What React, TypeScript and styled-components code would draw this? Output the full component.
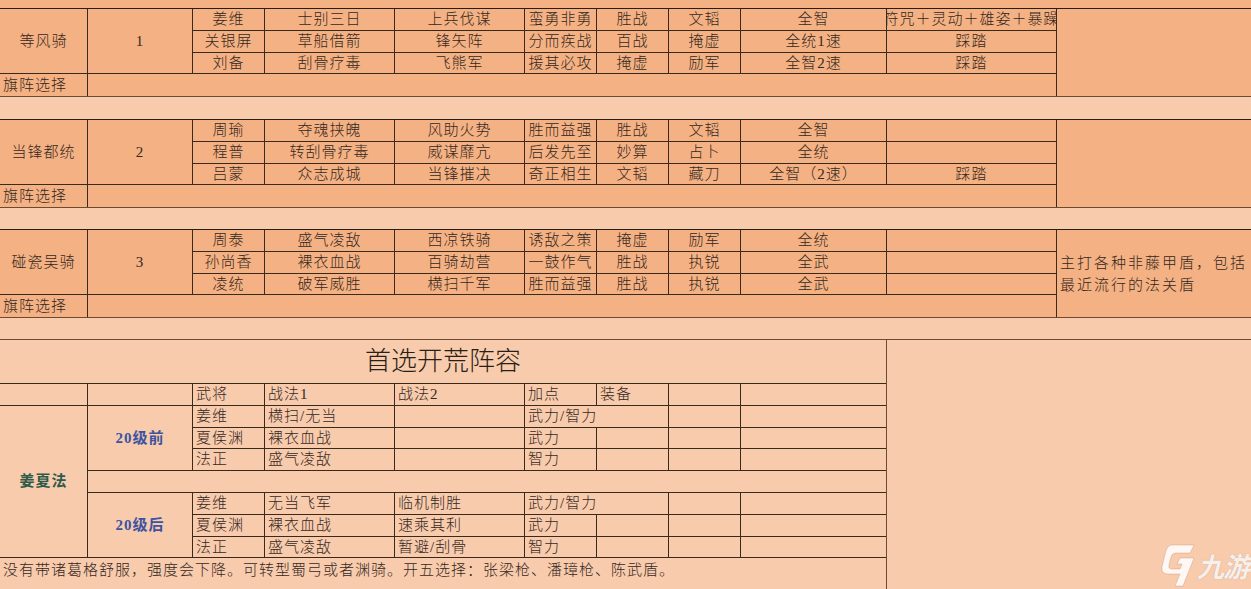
import styled, { createGlobalStyle } from "styled-components";

const GlobalStyle = createGlobalStyle`
  html, body {
    margin: 0;
    padding: 0;
    background: #f8cbad;
  }
  body {
    font-family: "Liberation Serif", "Noto Sans CJK SC", serif;
    color: #35281d;
  }
`;

const Page = styled.div`
  position: relative;
  width: 1251px;
  height: 589px;
  overflow: hidden;
  background: #f8cbad;
`;

const TopStrip = styled.div`
  height: 8px;
  background: #f4b183;
`;

const Spacer = styled.div<{ $h: number }>`
  height: ${(p) => p.$h}px;
`;

const SectionGrid = styled.div`
  display: grid;
  grid-template-columns: 87px 104px 71px 129px 129px 71px 71px 71px 145px 169px 1fr;
  grid-template-rows: 21px 21px 20px 22px;
  gap: 1px;
  background: #3a2a1c;
  border-top: 1px solid #2a1d12;
  border-bottom: 1px solid #6b4c33;
`;

const Cell = styled.div<{
  $span?: number;
  $rows?: number;
  $align?: "left" | "center";
  $light?: boolean;
}>`
  grid-column: span ${(p) => p.$span ?? 1};
  grid-row: span ${(p) => p.$rows ?? 1};
  display: flex;
  align-items: center;
  justify-content: ${(p) => (p.$align === "left" ? "flex-start" : "center")};
  padding: 0 ${(p) => (p.$align === "left" ? "3px" : "0")};
  background: ${(p) => (p.$light ? "#f8cbad" : "#f4b183")};
  font-size: 15px;
  font-weight: 300;
  letter-spacing: 1px;
  white-space: nowrap;
  overflow: hidden;
  line-height: 1;
`;

const NoteCell = styled(Cell)`
  white-space: normal;
  letter-spacing: 2px;
  line-height: 22px;
  padding: 0 0 0 3px;
`;

const BottomBlock = styled.div`
  display: flex;
  border-top: 1px solid #6b4c33;
`;

const PlanGrid = styled.div`
  width: 886px;
  display: grid;
  grid-template-columns: 87px 104px 71px 129px 129px 71px 71px 71px 145px;
  grid-template-rows: 43px 21px 21px 20px 21px 21px 21px 21px 20px 32px;
  gap: 1px;
  background: #3a2a1c;
  border-right: 1px solid #6b4c33;
`;

const Title = styled(Cell)`
  font-size: 26px;
  letter-spacing: 0;
  color: #2a1f16;
`;

const Footer = styled(Cell)`
  align-items: flex-start;
  padding-top: 5px;
`;

const Tag = styled(Cell)<{ $tone: "green" | "blue" }>`
  font-weight: bold;
  color: ${(p) => (p.$tone === "green" ? "#2e5a4b" : "#3c54a0")};
`;

const Mark = styled.div`
  position: absolute;
  right: 2px;
  bottom: 2px;
  display: flex;
  align-items: center;
  gap: 2px;
  color: rgba(255, 255, 255, 0.85);
`;

const MarkText = styled.span`
  font-family: "Noto Sans CJK SC", sans-serif;
  font-style: italic;
  font-weight: bold;
  font-size: 27px;
  letter-spacing: -1px;
  text-shadow: 0 0 1px rgba(150, 110, 80, 0.5);
`;

type Section = {
  name: string;
  num: string;
  rows: string[][];
  note?: string;
};

const sections: Section[] = [
  {
    name: "等风骑",
    num: "1",
    rows: [
      ["姜维", "士别三日", "上兵伐谋", "蛮勇非勇", "胜战", "文韬", "全智", "符咒＋灵动＋雄姿＋暴躁"],
      ["关银屏", "草船借箭", "锋矢阵", "分而疾战", "百战", "掩虚", "全统1速", "踩踏"],
      ["刘备", "刮骨疗毒", "飞熊军", "援其必攻", "掩虚", "励军", "全智2速", "踩踏"],
    ],
  },
  {
    name: "当锋都统",
    num: "2",
    rows: [
      ["周瑜", "夺魂挟魄", "风助火势", "胜而益强", "胜战", "文韬", "全智", ""],
      ["程普", "转刮骨疗毒", "威谋靡亢", "后发先至", "妙算", "占卜", "全统", ""],
      ["吕蒙", "众志成城", "当锋摧决", "奇正相生", "文韬", "藏刀", "全智（2速）", "踩踏"],
    ],
  },
  {
    name: "碰瓷吴骑",
    num: "3",
    rows: [
      ["周泰", "盛气凌敌", "西凉铁骑", "诱敌之策", "掩虚", "励军", "全统", ""],
      ["孙尚香", "裸衣血战", "百骑劫营", "一鼓作气", "胜战", "执锐", "全武", ""],
      ["凌统", "破军威胜", "横扫千军", "胜而益强", "胜战", "执锐", "全武", ""],
    ],
    note: "主打各种非藤甲盾，包括最近流行的法关盾",
  },
];

const early = [
  ["姜维", "横扫/无当", "", "武力/智力"],
  ["夏侯渊", "裸衣血战", "", "武力"],
  ["法正", "盛气凌敌", "", "智力"],
];

const late = [
  ["姜维", "无当飞军", "临机制胜", "武力/智力"],
  ["夏侯渊", "裸衣血战", "速乘其利", "武力"],
  ["法正", "盛气凌敌", "暂避/刮骨", "智力"],
];

const SectionTable = ({ data }: { data: Section }) => (
  <SectionGrid>
    <Cell $rows={3}>{data.name}</Cell>
    <Cell $rows={3}>{data.num}</Cell>
    {data.rows[0].map((t, i) => (
      <Cell key={i}>{t}</Cell>
    ))}
    <NoteCell $rows={4} $align="left">
      {data.note}
    </NoteCell>
    {data.rows.slice(1).map((row, r) =>
      row.map((t, i) => <Cell key={`${r}-${i}`}>{t}</Cell>)
    )}
    <Cell $align="left">旗阵选择</Cell>
    <Cell $span={9} />
  </SectionGrid>
);

const PlanRow = ({ row }: { row: string[] }) => {
  const wide = row[3].length > 2;
  return (
    <>
      <Cell $light $align="left">{row[0]}</Cell>
      <Cell $light $align="left">{row[1]}</Cell>
      <Cell $light $align="left">{row[2]}</Cell>
      <Cell $light $align="left" $span={wide ? 2 : 1}>
        {row[3]}
      </Cell>
      {!wide && <Cell $light />}
      <Cell $light />
      <Cell $light />
    </>
  );
};

const LogoGlyph = () => (
  <svg width="34" height="44" viewBox="0 0 34 44">
    <path
      d="M11 2 L33 2 L29 10 L15 10 Q11 10 10 14 L8 22 Q7 26 11 26 L19 26 L21 21 L16 21 L19 15 L33 15 L22 43 L14 43 L19 31 L7 31 Q0 31 1 24 L4 11 Q6 2 11 2 Z"
      fill="rgba(255,255,255,0.85)"
      stroke="rgba(170,120,90,0.35)"
      strokeWidth="0.8"
    />
  </svg>
);

const App = () => (
  <Page>
    <GlobalStyle />
    <TopStrip />
    <SectionTable data={sections[0]} />
    <Spacer $h={22} />
    <SectionTable data={sections[1]} />
    <Spacer $h={21} />
    <SectionTable data={sections[2]} />
    <Spacer $h={21} />
    <BottomBlock>
      <PlanGrid>
        <Title $light $span={9}>首选开荒阵容</Title>
        <Cell $light />
        <Cell $light />
        {["武将", "战法1", "战法2", "加点", "装备", "", ""].map((t, i) => (
          <Cell key={i} $light $align="left">{t}</Cell>
        ))}
        <Tag $light $tone="green" $rows={7}>姜夏法</Tag>
        <Tag $light $tone="blue" $rows={3}>20级前</Tag>
        {early.map((row, i) => (
          <PlanRow key={`e${i}`} row={row} />
        ))}
        <Cell $light $span={8} />
        <Tag $light $tone="blue" $rows={3}>20级后</Tag>
        {late.map((row, i) => (
          <PlanRow key={`l${i}`} row={row} />
        ))}
        <Footer $light $align="left" $span={9}>
          没有带诸葛格舒服，强度会下降。可转型蜀弓或者渊骑。开五选择：张梁枪、潘璋枪、陈武盾。
        </Footer>
      </PlanGrid>
    </BottomBlock>
    <Mark>
      <LogoGlyph />
      <MarkText>九游</MarkText>
    </Mark>
  </Page>
);

export default App;
